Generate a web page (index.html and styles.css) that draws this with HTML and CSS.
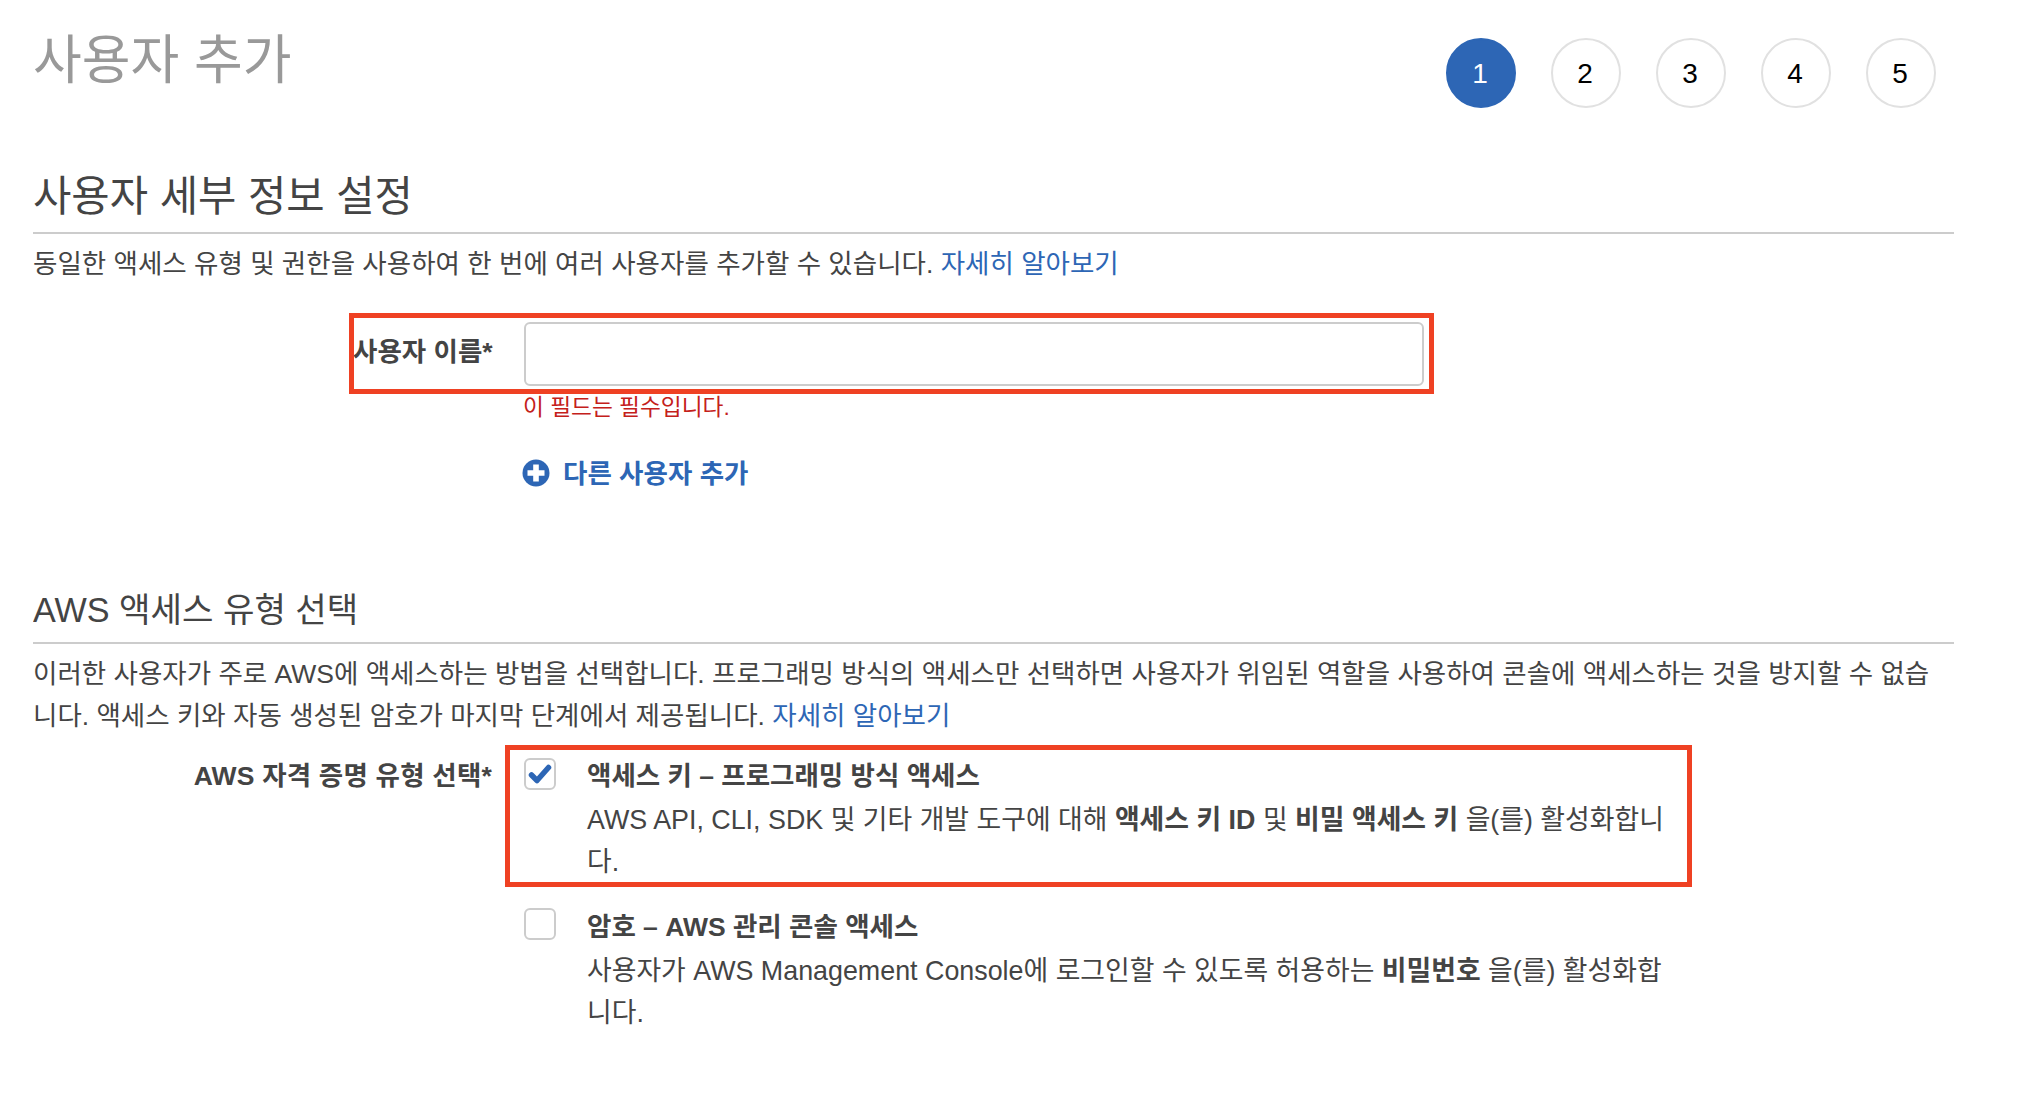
FILE: index.html
```html
<!DOCTYPE html>
<html lang="ko">
<head>
<meta charset="utf-8">
<title>사용자 추가</title>
<link rel="stylesheet" href="styles.css">
</head>
<body>
<main class="page">
  <header class="top">
    <h1 class="title">사용자 추가</h1>
    <ol class="steps">
      <li class="step active">1</li>
      <li class="step">2</li>
      <li class="step">3</li>
      <li class="step">4</li>
      <li class="step">5</li>
    </ol>
  </header>

  <section class="details">
    <h2 class="section-title">사용자 세부 정보 설정</h2>
    <p class="para">동일한 액세스 유형 및 권한을 사용하여 한 번에 여러 사용자를 추가할 수 있습니다. <a href="#">자세히 알아보기</a></p>
    <div class="name-box">
      <label class="name-label" for="username">사용자 이름*</label>
      <input class="name-input" id="username" type="text">
    </div>
    <p class="error">이 필드는 필수입니다.</p>
    <a class="add-user" href="#">
      <svg class="add-icon" viewBox="0 0 28 28" aria-hidden="true"><circle cx="14" cy="14" r="13.5" fill="#2d66b5"/><path d="M11.2 5.5h5.6v5.7h5.7v5.6h-5.7v5.7h-5.6v-5.7H5.5v-5.6h5.7z" fill="#fff"/></svg>
      <span>다른 사용자 추가</span>
    </a>
  </section>

  <section class="access">
    <h2 class="section-title small">AWS 액세스 유형 선택</h2>
    <p class="para wrap">이러한 사용자가 주로 AWS에 액세스하는 방법을 선택합니다. 프로그래밍 방식의 액세스만 선택하면 사용자가 위임된 역할을 사용하여 콘솔에 액세스하는 것을 방지할 수 없습니다. 액세스 키와 자동 생성된 암호가 마지막 단계에서 제공됩니다. <a href="#">자세히 알아보기</a></p>
    <div class="cred">
      <div class="cred-label">AWS 자격 증명 유형 선택*</div>
      <div class="cred-options">
        <div class="option boxed">
          <span class="check">
            <svg viewBox="0 0 24 20" aria-hidden="true"><path d="M3.5 11l5.5 5.5L20.5 3.5" fill="none" stroke="#2d66b5" stroke-width="5.5" stroke-linejoin="round" stroke-linecap="round"/></svg>
          </span>
          <div class="option-text">
            <div class="option-title">액세스 키 – 프로그래밍 방식 액세스</div>
            <div class="option-desc">AWS API, CLI, SDK 및 기타 개발 도구에 대해 <b>액세스 키 ID</b> 및 <b>비밀 액세스 키</b> 을(를) 활성화합니다.</div>
          </div>
        </div>
        <div class="option plain">
          <span class="check"></span>
          <div class="option-text">
            <div class="option-title">암호 – AWS 관리 콘솔 액세스</div>
            <div class="option-desc">사용자가 AWS Management Console에 로그인할 수 있도록 허용하는 <b>비밀번호</b> 을(를) 활성화합니다.</div>
          </div>
        </div>
      </div>
    </div>
  </section>
</main>
</body>
</html>
```
FILE: styles.css
```css
* { box-sizing: border-box; }
html, body { margin: 0; padding: 0; background: #fff; }
body {
  font-family: "Liberation Sans", "Noto Sans CJK KR", sans-serif;
  font-size: 26.5px;
  line-height: 42px;
  color: #444;
}
.page { width: 1921px; margin-left: 33px; height: 1120px; overflow: hidden; }
a { color: #2d66b5; text-decoration: none; }
p { margin: 0; }

.top { display: flex; justify-content: space-between; height: 174px; }
.title { margin: 32px 0 0; font-size: 53px; line-height: 58px; font-weight: 400; color: #999; }
.steps { list-style: none; display: flex; gap: 35px; margin: 38px 18px 0 0; padding: 0; height: 70px; }
.step {
  width: 70px; height: 70px; padding: 2px 2px 0 0; border: 2px solid #e1e1e1; border-radius: 50%;
  display: flex; align-items: center; justify-content: center;
  font-size: 28px; color: #000;
}
.step.active { background: #2d66b5; border-color: #2d66b5; color: #fff; }

.section-title {
  margin: 0 0 9px; border-bottom: 2px solid #ccc;
  font-size: 41.7px; line-height: 46px; font-weight: 400; color: #444;
  height: 60px;
}
.section-title.small { font-size: 34.2px; line-height: 46px; height: 57px; }

.name-box {
  display: flex; align-items: center; margin: 28px 0 0 316px;
  width: 1085px; height: 81px; border: 5px solid #ef4123; padding: 0 5px 0 0;
}
.name-label { width: 171px; margin: 0 0 4px -1px; font-weight: 700; white-space: nowrap; }
.name-input {
  flex: 1; height: 64px; border: 2px solid #ccc; border-radius: 6px; background: #fff; outline: none;
}
.error { margin: -2px 0 0 490px; font-size: 22.7px; line-height: 30px; color: #c4201a; }
.add-user {
  display: flex; align-items: center; gap: 13px; margin: 35px 0 0 489px;
  font-weight: 700; height: 34px; width: max-content;
}
.add-icon { width: 28px; height: 28px; margin-top: -2px; }

.access { margin-top: 96px; }
.wrap { width: 1905px; word-break: break-all; }

.cred { display: flex; margin-top: 8px; }
.cred-label { width: 459px; padding-top: 10px; text-align: right; font-weight: 700; letter-spacing: 0.2px; white-space: nowrap; }
.cred-options { margin-left: 13px; }
.option { display: flex; width: 1187px; }
.option.boxed { border: 5px solid #ef4123; height: 142px; padding: 5px 0 0 14px; }
.option.plain { margin-top: 19px; padding: 0 0 0 19px; }
.check {
  flex: none; width: 32px; height: 32px; border: 2px solid #ccc; border-radius: 6px; margin-top: 3px;
  display: flex; align-items: center; justify-content: center;
}
.plain .check { margin-top: 2px; }
.check svg { width: 24px; height: 20px; }
.option-text { margin-left: 31px; flex: none; width: 1085px; word-break: break-all; }
.option-title { font-weight: 700; }
.option-desc { margin-top: 2px; font-size: 26.85px; }
```
